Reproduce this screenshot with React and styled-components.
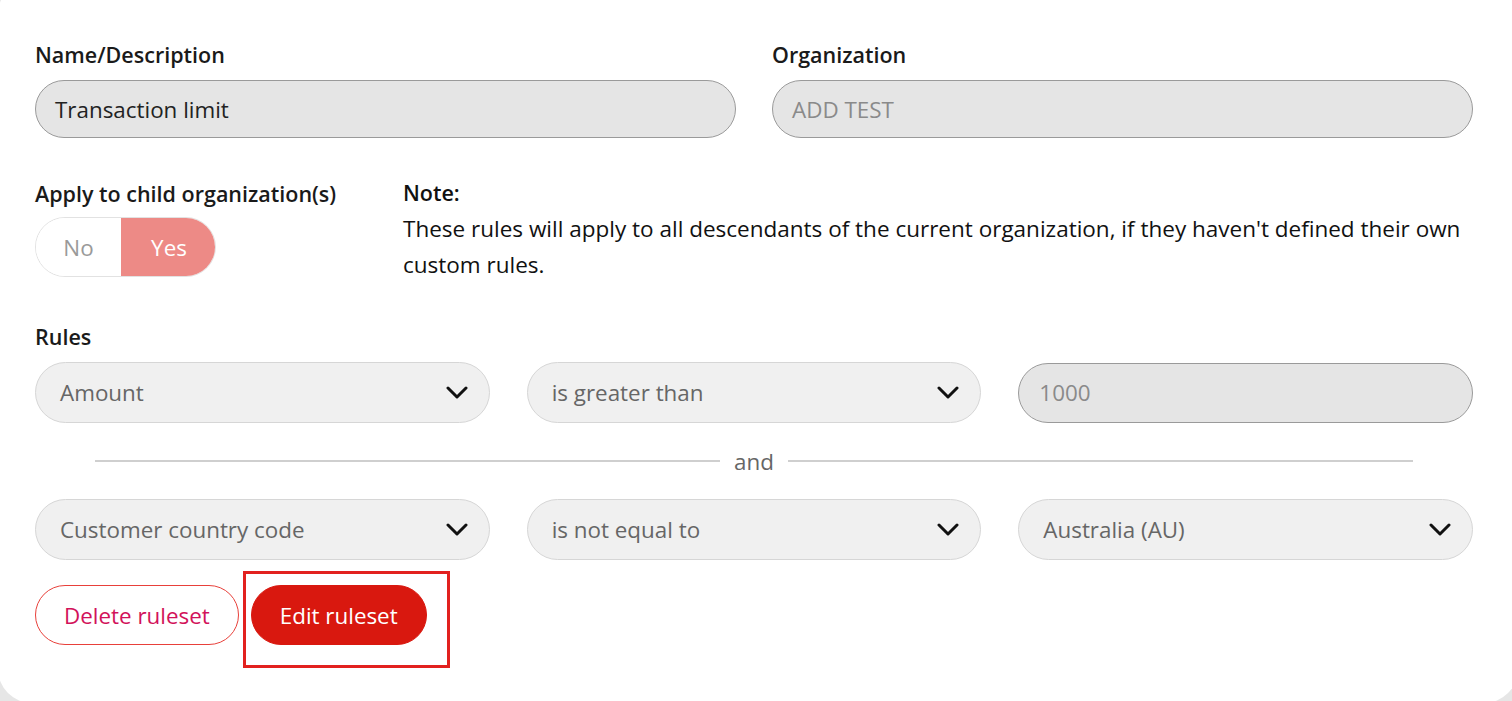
import React from "react";
import styled, { createGlobalStyle } from "styled-components";

// GLOBAL
const GlobalStyle = createGlobalStyle`
  html, body {
    margin: 0;
    padding: 0;
    background: #e6e6e6;
    overflow: hidden;
  }
  body {
    font-family: "Open Sans", "Noto Sans", "Liberation Sans", sans-serif;
    color: #1a1a1a;
  }
  * { box-sizing: border-box; }
`;

// STYLE
const Card = styled.div`
  margin: -20px -6px 0 -2px;
  height: 723px;
  padding: 61px 45px 0 37px;
  background: #fff;
  border-radius: 34px;
`;

const TwoCols = styled.div`
  display: grid;
  grid-template-columns: 1fr 1fr;
  column-gap: 36px;
`;

const Field = styled.div`
  display: flex;
  flex-direction: column;
  gap: 12px;
`;

const Label = styled.label`
  font-size: 21.5px;
  font-weight: 600;
  line-height: 27px;
  color: #1a1a1a;
`;

const TextInput = styled.div`
  height: ${(p) => p.$h || 58}px;
  padding: 0 ${(p) => p.$pl || 19}px;
  display: flex;
  align-items: center;
  background: #e5e5e5;
  border: 1px solid #9a9a9a;
  border-radius: 30px;
  font-size: 22.4px;
  color: ${(p) => (p.$placeholder ? "#8a8a8a" : "#222")};
`;

const ChildRow = styled.div`
  margin-top: 37px;
  display: grid;
  grid-template-columns: 368px 1fr;
`;

const ToggleField = styled.div`
  display: flex;
  flex-direction: column;
  padding-top: 5px;
  gap: 10px;
`;

const Toggle = styled.div`
  display: inline-flex;
  width: 181px;
  height: 60px;
  border-radius: 30px;
  overflow: hidden;
  border: 1px solid #e2e2e2;
`;

const ToggleOption = styled.div`
  flex: ${(p) => (p.$active ? "0 0 94px" : "1")};
  display: flex;
  align-items: center;
  justify-content: center;
  font-size: 22.4px;
  color: ${(p) => (p.$active ? "#fff" : "#9a9a9a")};
  background: ${(p) => (p.$active ? "#ed8a86" : "#fff")};
  padding-left: ${(p) => (p.$active ? "2px" : "0")};
`;

const Note = styled.div`
  font-size: 22.5px;
  line-height: 36px;
  color: #111;

  strong {
    display: block;
    font-size: 21.5px;
    font-weight: 600;
  }
`;

const RulesSection = styled.div`
  margin-top: 40px;
  display: flex;
  flex-direction: column;
`;

const RuleRow = styled.div`
  display: grid;
  grid-template-columns: repeat(3, 1fr);
  column-gap: 37px;
  align-items: center;
  margin-top: ${(p) => p.$mt || 0}px;
`;

const Select = styled.div`
  height: 61px;
  padding: 0 21px 0 24px;
  display: flex;
  align-items: center;
  justify-content: space-between;
  background: #f0f0f0;
  border: 1px solid #d6d6d6;
  border-radius: 31px;
  font-size: 22.4px;
  color: #666;

  svg {
    width: 22px;
    height: 14px;
  }
`;

const Divider = styled.div`
  height: 76px;
  padding: 0 60px;
  display: flex;
  align-items: center;
  gap: 14px;
  font-size: 22.4px;
  color: #666;

  &::before,
  &::after {
    content: "";
    flex: 1;
    height: 2px;
    background: #cfcfcf;
  }
`;

const Actions = styled.div`
  margin-top: 25px;
  display: flex;
  gap: 12px;
`;

const Button = styled.button`
  height: 60px;
  padding: 0 28px;
  border-radius: 30px;
  font-family: inherit;
  font-size: 22.4px;
  cursor: pointer;
  border: 1px solid ${(p) => (p.$primary ? "#d9180f" : "#e8403a")};
  background: ${(p) => (p.$primary ? "#d9180f" : "#fff")};
  color: ${(p) => (p.$primary ? "#fff" : "#d2125a")};
`;

const Highlight = styled.div`
  position: relative;

  &::after {
    content: "";
    position: absolute;
    top: -14px;
    left: -8px;
    right: -23px;
    bottom: -23px;
    border: 3px solid #e2211f;
    pointer-events: none;
  }
`;

// ICON
const Chevron = () => (
  <svg viewBox="0 0 22 14" fill="none">
    <polyline
      points="2,2 11,11 20,2"
      stroke="#111"
      strokeWidth="3"
      strokeLinecap="round"
      strokeLinejoin="round"
    />
  </svg>
);

// COMPONENT
const App = () => {
  return (
    <>
      <GlobalStyle />
      <Card>
        <TwoCols>
          <Field>
            <Label>Name/Description</Label>
            <TextInput>Transaction limit</TextInput>
          </Field>
          <Field>
            <Label>Organization</Label>
            <TextInput $placeholder>ADD TEST</TextInput>
          </Field>
        </TwoCols>

        <ChildRow>
          <ToggleField>
            <Label>Apply to child organization(s)</Label>
            <Toggle>
              <ToggleOption>No</ToggleOption>
              <ToggleOption $active>Yes</ToggleOption>
            </Toggle>
          </ToggleField>
          <Note>
            <strong>Note:</strong>
            These rules will apply to all descendants of the current organization, if they
            haven't defined their own custom rules.
          </Note>
        </ChildRow>

        <RulesSection>
          <Label>Rules</Label>
          <RuleRow $mt={12}>
            <Select>
              Amount
              <Chevron />
            </Select>
            <Select>
              is greater than
              <Chevron />
            </Select>
            <TextInput $h={60} $pl={20} $placeholder>
              1000
            </TextInput>
          </RuleRow>
          <Divider>and</Divider>
          <RuleRow>
            <Select>
              Customer country code
              <Chevron />
            </Select>
            <Select>
              is not equal to
              <Chevron />
            </Select>
            <Select>
              Australia (AU)
              <Chevron />
            </Select>
          </RuleRow>
        </RulesSection>

        <Actions>
          <Button>Delete ruleset</Button>
          <Highlight>
            <Button $primary>Edit ruleset</Button>
          </Highlight>
        </Actions>
      </Card>
    </>
  );
};

export default App;
